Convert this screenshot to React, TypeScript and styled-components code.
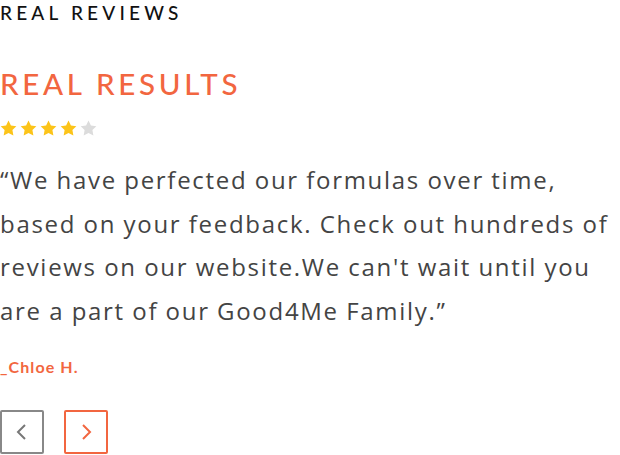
import React from "react";
import styled, { createGlobalStyle } from "styled-components";

const GlobalStyle = createGlobalStyle`
  body {
    margin: 0;
    background: #ffffff;
    font-family: "Lato", "Open Sans", sans-serif;
  }
`;

const Wrapper = styled.section`
  width: 620px;
  height: 455px;
  overflow: hidden;
  display: flex;
  flex-direction: column;
`;

const Eyebrow = styled.h3`
  margin: 0;
  padding-top: 2px;
  font-size: 19px;
  font-weight: 500;
  letter-spacing: 4.2px;
  line-height: 22px;
  color: #111;
`;

const Title = styled.h2`
  margin: 43px 0 0;
  font-size: 29.5px;
  font-weight: 500;
  letter-spacing: 3.7px;
  line-height: 34px;
  color: #f26640;
`;

const Stars = styled.div`
  display: flex;
  gap: 3px;
  margin-top: 19px;
`;

const Quote = styled.p`
  margin: 22px 0 0;
  font-family: "Open Sans", sans-serif;
  font-size: 24px;
  line-height: 43.7px;
  letter-spacing: 1.7px;
  word-spacing: -0.5px;
  color: #444;
  white-space: nowrap;
`;

const Author = styled.p`
  margin: 24px 0 0;
  font-size: 16px;
  font-weight: 700;
  letter-spacing: 1.1px;
  color: #f26640;
`;

const Nav = styled.div`
  display: flex;
  gap: 20px;
  margin-top: 34px;
`;

const NavButton = styled.button<{ $active?: boolean }>`
  width: 44px;
  height: 44px;
  padding: 0;
  display: flex;
  align-items: center;
  justify-content: center;
  background: #fff;
  border: 2px solid ${(p) => (p.$active ? "#f26640" : "#888")};
  border-radius: 2px;
  color: ${(p) => (p.$active ? "#f26640" : "#777")};
  cursor: pointer;
`;

const Star = ({ filled }: { filled: boolean }) => (
  <svg width="17" height="16" viewBox="0 0 24 23">
    <path
      d="M12 0.8l3.5 7.1 7.8 1.1-5.65 5.5 1.35 7.8L12 18.6l-6.95 3.7 1.35-7.8L0.75 9l7.8-1.1z"
      fill={filled ? "#fcc419" : "#dcdcdc"}
    />
  </svg>
);

const Chevron = ({ dir }: { dir: "left" | "right" }) => (
  <svg width="14" height="20" viewBox="0 0 14 20" fill="none">
    <path
      d={dir === "left" ? "M10 3L3 10l7 7" : "M4 3l7 7-7 7"}
      stroke="currentColor"
      strokeWidth="2"
    />
  </svg>
);

const App = () => {
  const rating = 4;
  return (
    <Wrapper>
      <GlobalStyle />
      <Eyebrow>REAL REVIEWS</Eyebrow>
      <Title>REAL RESULTS</Title>
      <Stars>
        {[1, 2, 3, 4, 5].map((n) => (
          <Star key={n} filled={n <= rating} />
        ))}
      </Stars>
      <Quote>
        “We have perfected our formulas over time,
        <br />
        based on your feedback. Check out hundreds of
        <br />
        reviews on our website.We can't wait until you
        <br />
        are a part of our Good4Me Family.”
      </Quote>
      <Author>_Chloe H.</Author>
      <Nav>
        <NavButton aria-label="Previous">
          <Chevron dir="left" />
        </NavButton>
        <NavButton $active aria-label="Next">
          <Chevron dir="right" />
        </NavButton>
      </Nav>
    </Wrapper>
  );
};

export default App;
